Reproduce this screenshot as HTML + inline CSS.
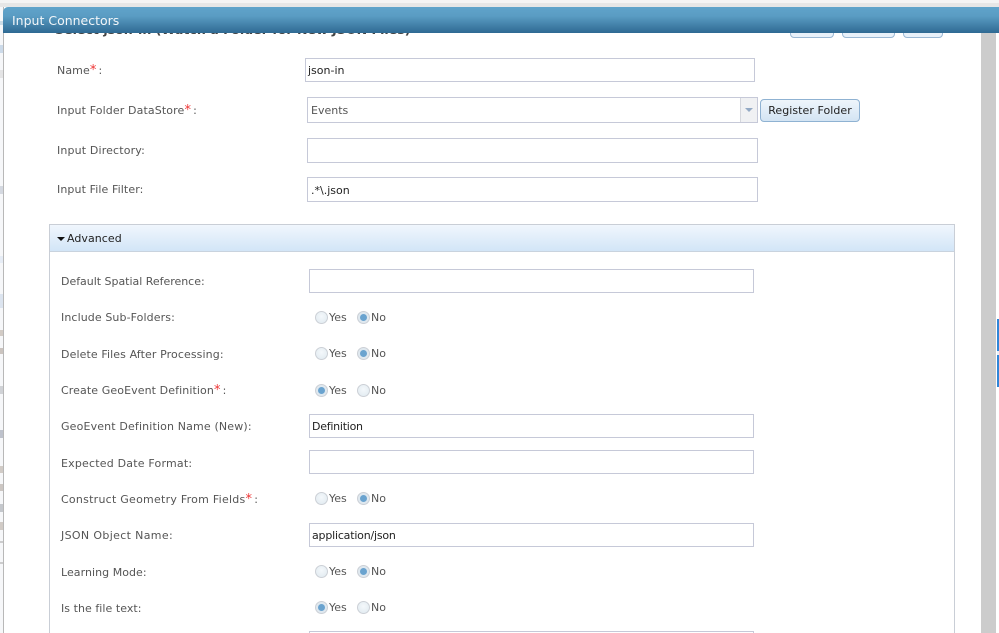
<!DOCTYPE html>
<html><head><meta charset="utf-8"><style>
html,body{margin:0;padding:0;background:#fff;}
#p{position:relative;width:999px;height:633px;overflow:hidden;background:#fff;font-family:"DejaVu Sans","Liberation Sans",sans-serif;font-size:11px;color:#555;filter:blur(.3px);}
#p div{position:absolute;box-sizing:border-box;}
.l{white-space:nowrap;line-height:14px;height:14px;color:#555;}
.l b{font-weight:normal;color:#e33;font-size:13px;line-height:10px;margin:0 2px 0 0;}
.i{background:#fff;border:1px solid #c6c9d8;color:#222;white-space:nowrap;padding-left:3px;}
.r{width:13px;height:13px;border-radius:50%;border:1.5px solid #ccd0d6;background:radial-gradient(circle at 50% 40%,#f4f8fb,#dfe9ef);}
.r.on{background:#dfe8ef;}
.r.on:after{content:"";position:absolute;left:1.5px;top:1.5px;width:7px;height:7px;border-radius:50%;background:#6aa3cf;}
.t{white-space:nowrap;color:#555;line-height:14px;height:14px;}
.sl{left:0;width:3px;opacity:.55;}
</style></head><body><div id="p">
<div style="left:0;top:0;width:999px;height:3px;background:#f4f4f4"></div>
<div style="left:0;top:3px;width:999px;height:4px;background:#e6e6e6"></div>
<div style="left:0;top:7px;width:3px;height:626px;background:#f6f7f9"></div>
<div class="sl" style="top:21px;height:4px;background:#a9c6d8"></div>
<div class="sl" style="top:45px;height:8px;background:#a9c3dc"></div>
<div class="sl" style="top:70px;height:8px;background:#d5d5d5"></div>
<div class="sl" style="top:186px;height:8px;background:#b8c0cc"></div>
<div class="sl" style="top:256px;height:7px;background:#d8e4f2"></div>
<div class="sl" style="top:294px;height:14px;background:#c7d5e8"></div>
<div class="sl" style="top:330px;height:6px;background:#b5a89a"></div>
<div class="sl" style="top:348px;height:6px;background:#a79a90"></div>
<div class="sl" style="top:386px;height:8px;background:#b0b5ba"></div>
<div class="sl" style="top:430px;height:8px;background:#8f98a8"></div>
<div class="sl" style="top:466px;height:7px;background:#b3a79c"></div>
<div class="sl" style="top:484px;height:7px;background:#a99f96"></div>
<div class="sl" style="top:504px;height:8px;background:#9aa0a8"></div>
<div class="sl" style="top:522px;height:8px;background:#b3a79c"></div>
<div class="sl" style="top:541px;height:2px;background:#aaa"></div>
<div class="sl" style="top:562px;height:2px;background:#aaa"></div>

<div style="left:3px;top:7px;width:1px;height:626px;background:#b8b8b8"></div>
<div style="left:981px;top:33px;width:15px;height:600px;background:#cccccc"></div>
<div style="left:996px;top:7px;width:3px;height:626px;background:#fff"></div>
<div style="left:997px;top:319px;width:2px;height:68px;background:#2f86d8"></div>
<div style="left:997px;top:351px;width:2px;height:4px;background:#e8f0f8"></div>

<div style="left:55px;top:23px;white-space:nowrap;font-size:12.6px;font-weight:bold;color:#444;line-height:14px;">Select json-in (Watch a Folder for New JSON Files)</div>
<div style="left:790px;top:20px;width:44px;height:18px;border:1px solid #9ab8d4;border-radius:4px;background:#e8f1fa"></div>
<div style="left:842px;top:20px;width:53px;height:18px;border:1px solid #9ab8d4;border-radius:4px;background:#e8f1fa"></div>
<div style="left:903px;top:20px;width:40px;height:18px;border:1px solid #9ab8d4;border-radius:4px;background:#e8f1fa"></div>

<div style="left:3px;top:7px;width:996px;height:26px;border-radius:5px 0 0 0;background:linear-gradient(#5fa3ca,#5a9cc3 35%,#2f6a93);color:#f2f6f9;font-size:12.5px;line-height:28px;padding-left:9px;">Input Connectors</div>

<div class="l" style="left:57px;top:64px;letter-spacing:.1px">Name<b>*</b>:</div>
<div class="i" style="left:305px;top:58px;width:450px;height:24px;line-height:24px;padding-left:2px">json-in</div>

<div class="l" style="left:57px;top:104px;letter-spacing:.12px">Input Folder DataStore<b>*</b>:</div>
<div class="i" style="left:307px;top:97px;width:451px;height:26px;line-height:25px;color:#555;">Events</div>
<div style="left:740px;top:98px;width:17px;height:24px;background:#f0f1f3;border-left:1px solid #d5d7dd"></div>
<div style="left:745px;top:108px;width:0;height:0;border-left:4px solid transparent;border-right:4px solid transparent;border-top:4px solid #93a9c4"></div>
<div style="left:760px;top:99px;width:100px;height:23px;border:1px solid #8fb2d2;border-radius:4px;background:linear-gradient(#eef5fb,#d3e4f3);color:#222;text-align:center;line-height:22px;letter-spacing:.05px">Register Folder</div>

<div class="l" style="left:57px;top:144px;letter-spacing:.15px">Input Directory:</div>
<div class="i" style="left:307px;top:138px;width:451px;height:25px;"></div>

<div class="l" style="left:57px;top:183px;letter-spacing:.1px">Input File Filter:</div>
<div class="i" style="left:307px;top:177px;width:451px;height:25px;line-height:25px;">.*\.json</div>

<div style="left:49px;top:224px;width:906px;height:420px;border:1px solid #c9ced6;background:#fff"></div>
<div style="left:50px;top:225px;width:904px;height:27px;background:linear-gradient(#f0f6fd,#d2e5f7);border-bottom:1px solid #c9d3de;color:#222;line-height:28px;padding-left:17px;letter-spacing:.05px">Advanced</div>
<div style="left:57px;top:237px;width:0;height:0;border-left:4px solid transparent;border-right:4px solid transparent;border-top:4px solid #111"></div>

<div class="l" style="left:61px;top:275px;letter-spacing:-.02px">Default Spatial Reference:</div>
<div class="i" style="left:309px;top:269px;width:445px;height:24px;"></div>

<div class="l" style="left:61px;top:311px;letter-spacing:.1px">Include Sub-Folders:</div>
<div class="r" style="left:315px;top:311px"></div><div class="t" style="left:329px;top:311px">Yes</div>
<div class="r on" style="left:357px;top:311px"></div><div class="t" style="left:371px;top:311px">No</div>

<div class="l" style="left:61px;top:348px;letter-spacing:.1px">Delete Files After Processing:</div>
<div class="r" style="left:315px;top:347px"></div><div class="t" style="left:329px;top:347px">Yes</div>
<div class="r on" style="left:357px;top:347px"></div><div class="t" style="left:371px;top:347px">No</div>

<div class="l" style="left:61px;top:384px;letter-spacing:.1px">Create GeoEvent Definition<b>*</b>:</div>
<div class="r on" style="left:315px;top:384px"></div><div class="t" style="left:329px;top:384px">Yes</div>
<div class="r" style="left:357px;top:384px"></div><div class="t" style="left:371px;top:384px">No</div>

<div class="l" style="left:61px;top:420px;letter-spacing:.15px">GeoEvent Definition Name (New):</div>
<div class="i" style="left:309px;top:414px;width:445px;height:24px;line-height:24px;padding-left:2px;letter-spacing:-.25px">Definition</div>

<div class="l" style="left:61px;top:457px;letter-spacing:.2px">Expected Date Format:</div>
<div class="i" style="left:309px;top:450px;width:445px;height:24px;"></div>

<div class="l" style="left:61px;top:493px;letter-spacing:.25px">Construct Geometry From Fields<b>*</b>:</div>
<div class="r" style="left:315px;top:492px"></div><div class="t" style="left:329px;top:492px">Yes</div>
<div class="r on" style="left:357px;top:492px"></div><div class="t" style="left:371px;top:492px">No</div>

<div class="l" style="left:61px;top:529px;letter-spacing:.35px">JSON Object Name:</div>
<div class="i" style="left:309px;top:523px;width:445px;height:24px;line-height:24px;padding-left:2px;letter-spacing:-.2px">application/json</div>

<div class="l" style="left:61px;top:566px;letter-spacing:.05px">Learning Mode:</div>
<div class="r" style="left:315px;top:565px"></div><div class="t" style="left:329px;top:565px">Yes</div>
<div class="r on" style="left:357px;top:565px"></div><div class="t" style="left:371px;top:565px">No</div>

<div class="l" style="left:61px;top:602px;letter-spacing:.05px">Is the file text:</div>
<div class="r on" style="left:315px;top:601px"></div><div class="t" style="left:329px;top:601px">Yes</div>
<div class="r" style="left:357px;top:601px"></div><div class="t" style="left:371px;top:601px">No</div>

<div class="i" style="left:309px;top:631px;width:445px;height:24px;"></div>
</div></body></html>
